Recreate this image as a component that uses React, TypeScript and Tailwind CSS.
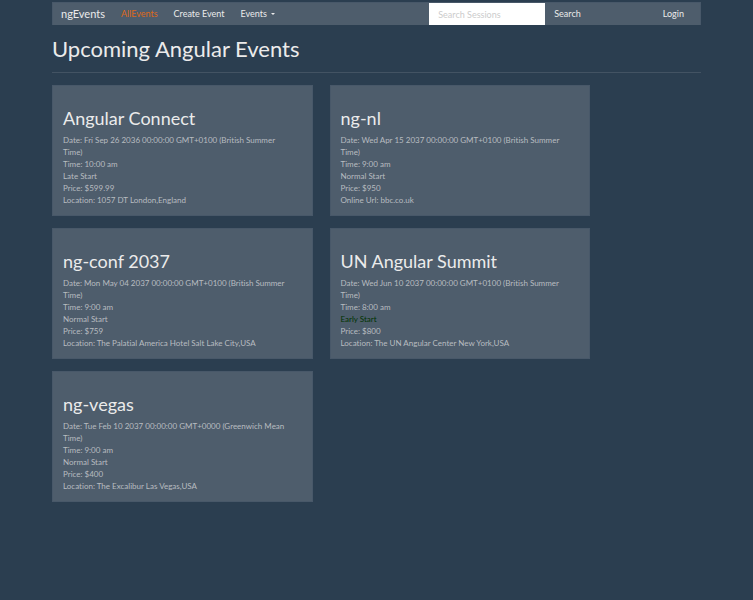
type EventItem = {
  name: string;
  date: string;
  time: string;
  start: string;
  price: string;
  place: string;
};

const events: EventItem[] = [
  {
    name: "Angular Connect",
    date: "Fri Sep 26 2036 00:00:00 GMT+0100 (British Summer Time)",
    time: "10:00 am",
    start: "Late Start",
    price: "$599.99",
    place: "Location: 1057 DT London,England",
  },
  {
    name: "ng-nl",
    date: "Wed Apr 15 2037 00:00:00 GMT+0100 (British Summer Time)",
    time: "9:00 am",
    start: "Normal Start",
    price: "$950",
    place: "Online Url: bbc.co.uk",
  },
  {
    name: "ng-conf 2037",
    date: "Mon May 04 2037 00:00:00 GMT+0100 (British Summer Time)",
    time: "9:00 am",
    start: "Normal Start",
    price: "$759",
    place: "Location: The Palatial America Hotel Salt Lake City,USA",
  },
  {
    name: "UN Angular Summit",
    date: "Wed Jun 10 2037 00:00:00 GMT+0100 (British Summer Time)",
    time: "8:00 am",
    start: "Early Start",
    price: "$800",
    place: "Location: The UN Angular Center New York,USA",
  },
  {
    name: "ng-vegas",
    date: "Tue Feb 10 2037 00:00:00 GMT+0000 (Greenwich Mean Time)",
    time: "9:00 am",
    start: "Normal Start",
    price: "$400",
    place: "Location: The Excalibur Las Vegas,USA",
  },
];

function NavBar() {
  return (
    <nav className="flex h-[23px] items-center border border-b-0 border-[#485869] bg-[#4e5d6c] text-[9px] leading-3 text-[#ebebeb]">
      <a href="#" className="px-2 text-[11px]">ngEvents</a>
      <a href="#" className="px-2 text-[#df691a]">AllEvents</a>
      <a href="#" className="px-2">Create Event</a>
      <button type="button" className="flex items-center gap-1 px-2">
        Events
        <span className="border-x-2 border-t-2 border-x-transparent border-t-[#ebebeb]" />
      </button>
      <form className="ml-auto flex h-full items-center" onSubmit={(e) => e.preventDefault()}>
        <input
          type="text"
          aria-label="Search Sessions"
          placeholder="Search Sessions"
          className="h-full w-[116px] bg-white px-[9px] text-[#2b3e50] outline-none placeholder:text-[#cccccc]"
        />
        <button type="submit" className="px-[9px]">Search</button>
      </form>
      <a href="#" className="ml-[65px] px-4 pl-2">Login</a>
    </nav>
  );
}

function EventCard({ event }: { event: EventItem }) {
  const startColor = event.start === "Early Start" ? "text-[#003300]" : "";
  return (
    <article className="border border-[#485869] bg-[#4e5d6c] pt-5 pr-6 pb-[9px] pl-[10px] text-[8px] leading-3 text-[#b8bcc0]">
      <h2 className="mb-1 text-[18px] leading-6 text-[#ebebeb]">{event.name}</h2>
      <div>{`Date: ${event.date}`}</div>
      <div>{`Time: ${event.time}`}</div>
      <div className={startColor}>{event.start}</div>
      <div>{`Price: ${event.price}`}</div>
      <div>{event.place}</div>
    </article>
  );
}

export default function App() {
  return (
    <div className="min-h-screen bg-[#2b3e50] px-[52px] pt-[2px] pb-6 font-['Lato',sans-serif] text-[#ebebeb] [font-variant-ligatures:none]">
      <NavBar />
      <main>
        <h1 className="mt-3 text-[22px] leading-6">Upcoming Angular Events</h1>
        <hr className="mt-[11px] mb-3 border-[#435363]" />
        <div className="mr-[111px] grid grid-cols-2 gap-x-[17px] gap-y-3">
          {events.map((event) => (
            <EventCard key={event.name} event={event} />
          ))}
        </div>
      </main>
    </div>
  );
}
